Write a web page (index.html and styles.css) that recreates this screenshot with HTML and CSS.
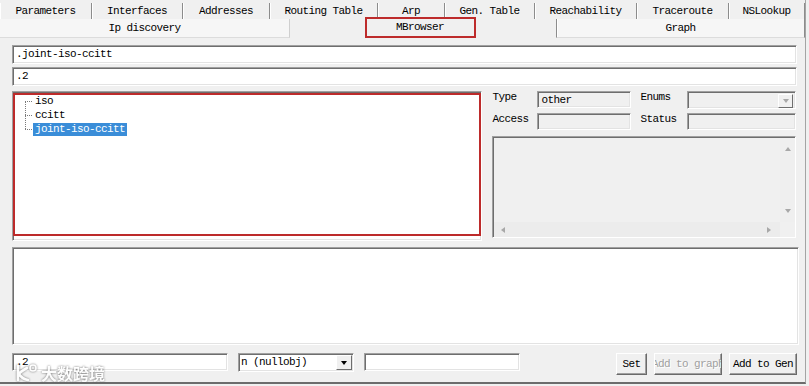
FILE: index.html
```html
<!DOCTYPE html>
<html lang="en">
<head>
    <meta charset="utf-8" />
    <title>MBrowser</title>
    <link rel="stylesheet" href="styles.css">
</head>
<body>
<div class="window">
    <!-- tabs start -->
    <nav class="tabs tabs-top">
        <div class="tab">Parameters</div>
        <div class="tab">Interfaces</div>
        <div class="tab">Addresses</div>
        <div class="tab">Routing Table</div>
        <div class="tab">Arp</div>
        <div class="tab">Gen. Table</div>
        <div class="tab">Reachability</div>
        <div class="tab">Traceroute</div>
        <div class="tab">NSLookup</div>
    </nav>
    <nav class="tabs tabs-sub">
        <div class="tab">Ip discovery</div>
        <div class="tab active"><span class="mark">MBrowser</span></div>
        <div class="tab tab-graph">Graph</div>
    </nav>
    <!-- tabs end -->

    <main class="panel">
        <div class="field">.joint-iso-ccitt</div>
        <div class="field field-oid">.2</div>

        <div class="middle">
            <div class="tree-frame">
                <div class="tree">
                    <ul>
                        <li><span class="node">iso</span></li>
                        <li><span class="node">ccitt</span></li>
                        <li><span class="node sel">joint-iso-ccitt</span></li>
                    </ul>
                </div>
            </div>

            <section class="props">
                <div class="prop-grid">
                    <label>Type</label>
                    <div class="box">other</div>
                    <label class="lbl-right">Enums</label>
                    <div class="box combo-off"><span class="drop"><i class="tri tri-down tri-gray"></i></span></div>
                    <label>Access</label>
                    <div class="box"></div>
                    <label class="lbl-right">Status</label>
                    <div class="box"></div>
                </div>
                <div class="desc">
                    <div class="desc-body"></div>
                    <div class="vscroll">
                        <i class="tri tri-up tri-gray"></i>
                        <i class="tri tri-down tri-gray"></i>
                    </div>
                    <div class="hscroll">
                        <i class="tri tri-left tri-gray"></i>
                        <i class="tri tri-right tri-gray"></i>
                    </div>
                    <div class="corner"></div>
                </div>
            </section>
        </div>

        <div class="output"></div>

        <div class="bottom-row">
            <div class="field input-oid">.2</div>
            <div class="field combo">n (nullobj)<span class="drop"><i class="tri tri-down"></i></span></div>
            <div class="field input-val"></div>
            <div class="buttons">
                <button class="btn btn-set">Set</button>
                <button class="btn btn-off">Add to graph</button>
                <button class="btn btn-gen">Add to Gen</button>
            </div>
        </div>
    </main>

    <!-- watermark -->
    <div class="watermark">
        <svg width="24" height="20" viewBox="0 0 24 20">
            <path d="M4 3 L4 17 M13 5 Q6 9 5 11 Q8 16 14 17" fill="none" stroke="#fff" stroke-width="2.6" stroke-linecap="round"/>
            <circle cx="19" cy="5" r="3" fill="none" stroke="#fff" stroke-width="1.6"/>
        </svg>
        <span>大数跨境</span>
    </div>
</div>
</body>
</html>
```

FILE: styles.css
```css
* {
    box-sizing: border-box;
    margin: 0;
    padding: 0;
}

html,
body {
    width: 809px;
    height: 386px;
    overflow: hidden;
}

body {
    background-color: #f0f0f0;
    font-family: "Liberation Mono", "DejaVu Sans Mono", monospace;
    font-size: 11px;
    letter-spacing: -0.6px;
    color: #000;
}

.window {
    position: relative;
    width: 806px;
    height: 384px;
    border-right: 1px solid #a4a4a4;
    border-bottom: 2px solid #6c6c6c;
}

/* tabs */
.tabs {
    display: grid;
    height: 19px;
}

.tabs-top {
    grid-template-columns: 92px 91px 87px 108px 67px 90px 102px 92px 76px;
}

.tabs-top .tab {
    margin-top: 3px;
    line-height: 16px;
    text-align: center;
    border-right: 1px solid #8c8c8c;
    box-shadow: inset 1px 0 #fff;
}

.tabs-sub {
    grid-template-columns: 290px 266px 249px;
}

.tabs-sub .tab {
    line-height: 18px;
    text-align: center;
    background-color: #f6f6f6;
    border-right: 1px solid #cfcfcf;
    border-bottom: 1px solid #dcdcdc;
}

.tabs-sub .active {
    display: flex;
    justify-content: center;
    align-items: center;
    background-color: #f0f0f0;
    border: none;
}

.tabs-sub .tab-graph {
    border-left: 1px solid #8c8c8c;
    border-right: 1px solid #8c8c8c;
    box-shadow: inset 1px 0 #fff;
}

.mark {
    display: block;
    width: 111px;
    height: 21px;
    margin: -2px 6px 0 0;
    border: 2px solid #bd2b2b;
    line-height: 17px;
    text-align: center;
}

/* main panel */
.panel {
    padding: 7px 8px 0 12px;
}

.field {
    height: 19px;
    background-color: #fff;
    border: 1px solid;
    border-color: #a0a0a0 #fff #fff #a0a0a0;
    box-shadow: inset 1px 1px #6e6e6e, inset -1px -1px #e3e3e3;
    padding-left: 3px;
    line-height: 17px;
    white-space: nowrap;
    overflow: hidden;
}

.field-oid {
    margin-top: 3px;
}

.middle {
    display: flex;
    height: 150px;
    margin-top: 5px;
}

.tree-frame {
    width: 471px;
    background-color: #fff;
    border: 1px solid;
    border-color: #a0a0a0 #fff #fff #a0a0a0;
    box-shadow: inset 1px 1px #6e6e6e, inset -1px -1px #e3e3e3;
}

.tree {
    height: 143px;
    margin-top: 1px;
    box-shadow: inset 0 0 0 2px #bd2b2b;
}

.tree ul {
    position: relative;
    list-style: none;
    padding-top: 1px;
}

.tree ul::before {
    content: '';
    position: absolute;
    left: 12px;
    top: 8px;
    height: 28px;
    border-left: 1px dotted #7a7a7a;
}

.tree li {
    position: relative;
    height: 14px;
    line-height: 14px;
    padding-left: 20px;
}

.tree li::before {
    content: '';
    position: absolute;
    left: 12px;
    top: 7px;
    width: 7px;
    border-top: 1px dotted #7a7a7a;
}

.node {
    display: inline-block;
    padding: 0 2px;
    line-height: 13px;
}

.sel {
    background-color: #3a8dd8;
    color: #fff;
}

/* properties */
.props {
    width: 305px;
    margin-left: 10px;
}

.prop-grid {
    display: grid;
    grid-template-columns: 45px 94px 56px 109px;
    grid-template-rows: 17px 17px;
    row-gap: 5px;
}

.prop-grid label {
    line-height: 13px;
}

.prop-grid .lbl-right {
    padding-left: 9px;
}

.box {
    position: relative;
    background-color: #f0f0f0;
    border: 1px solid;
    border-color: #a0a0a0 #fff #fff #a0a0a0;
    box-shadow: inset 1px 1px #6e6e6e, inset -1px -1px #e3e3e3;
    padding-left: 3px;
    line-height: 16px;
}

.combo-off {
    height: 18px;
}

.drop {
    position: absolute;
    top: 2px;
    right: 2px;
    width: 15px;
    height: 14px;
    display: flex;
    align-items: center;
    justify-content: center;
    background-color: #f0f0f0;
    border: 1px solid;
    border-color: #fff #6e6e6e #6e6e6e #fff;
}

.desc {
    display: grid;
    grid-template-columns: 1fr 15px;
    grid-template-rows: 1fr 15px;
    width: 304px;
    height: 102px;
    margin-top: 6px;
    border: 1px solid;
    border-color: #a0a0a0 #fff #fff #a0a0a0;
    box-shadow: inset 1px 1px #6e6e6e;
    padding: 1px 0 0 1px;
}

.vscroll {
    display: flex;
    flex-direction: column;
    justify-content: space-between;
    align-items: center;
    padding: 9px 0 9px;
    background-color: #efefef;
}

.hscroll {
    display: flex;
    justify-content: space-between;
    align-items: center;
    padding: 0 9px 0 7px;
    background-color: #ececec;
}

.corner {
    background-color: #f0f0f0;
}

.tri {
    display: block;
    width: 0;
    height: 0;
    border: 3px solid transparent;
}

.tri-down {
    border-top: 4px solid #000;
    border-bottom: 0;
}

.tri-up {
    border-bottom: 4px solid #000;
    border-top: 0;
}

.tri-left {
    border-right: 4px solid #000;
    border-left: 0;
}

.tri-right {
    border-left: 4px solid #000;
    border-right: 0;
}

.tri-gray {
    border-top-color: transparent;
    border-bottom-color: transparent;
}

.tri-down.tri-gray { border-top-color: #a8a8a8; }
.tri-up.tri-gray { border-bottom-color: #a8a8a8; }
.tri-left.tri-gray { border-right-color: #a8a8a8; border-top-color: transparent; border-bottom-color: transparent; }
.tri-right.tri-gray { border-left-color: #a8a8a8; }

/* output area */
.output {
    width: 787px;
    height: 98px;
    margin-top: 6px;
    background-color: #fff;
    border: 1px solid;
    border-color: #a0a0a0 #fff #fff #a0a0a0;
    box-shadow: inset 1px 1px #6e6e6e, inset -1px -1px #e3e3e3;
}

/* bottom row */
.bottom-row {
    display: flex;
    align-items: flex-start;
    margin-top: 7px;
}

.input-oid {
    width: 216px;
    height: 18px;
    margin-top: 1px;
}

.combo {
    position: relative;
    width: 116px;
    height: 19px;
    margin: 1px 0 0 10px;
    padding-left: 2px;
}

.combo .drop {
    top: 1px;
    right: 1px;
    width: 16px;
    height: 15px;
}

.input-val {
    width: 156px;
    height: 18px;
    margin: 1px 0 0 10px;
}

.buttons {
    display: flex;
    gap: 7px;
    margin-left: auto;
}

.btn {
    display: flex;
    justify-content: center;
    align-items: center;
    height: 22px;
    margin-top: 1px;
    overflow: hidden;
    white-space: nowrap;
    font-family: inherit;
    font-size: 11px;
    letter-spacing: -0.6px;
    color: #000;
    background-color: #f0f0f0;
    border: 1px solid;
    border-color: #fff #6a6a6a #6a6a6a #fff;
    box-shadow: inset -1px -1px #a0a0a0;
}

.btn-set {
    width: 31px;
}

.btn-off,
.btn-gen {
    width: 68px;
}

.btn-off {
    color: #a0a0a0;
    text-shadow: 1px 1px #fff;
}

/* watermark over the picture */
.watermark {
    position: absolute;
    left: 14px;
    top: 363px;
    display: flex;
    align-items: center;
    gap: 3px;
    opacity: 0.85;
    filter: drop-shadow(0 0 1px #5a5a5a);
}

.watermark span {
    font-family: "Noto Sans CJK SC", sans-serif;
    font-size: 16px;
    font-weight: 700;
    letter-spacing: 0;
    color: #fff;
    line-height: 20px;
}
```
